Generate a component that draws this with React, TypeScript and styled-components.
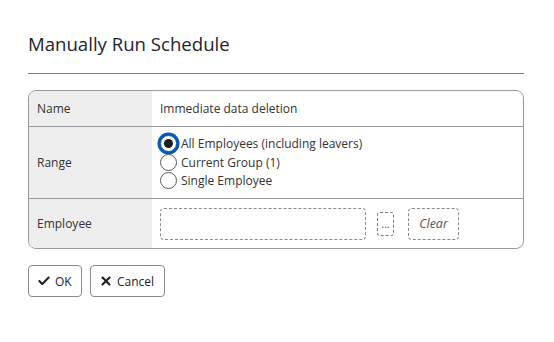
import styled, { createGlobalStyle } from 'styled-components';
import { Check, X } from 'lucide-react';

const GlobalStyle = createGlobalStyle`
  body {
    margin: 0;
    background: #ffffff;
    font-family: 'Open Sans', 'Liberation Sans', sans-serif;
    color: #333333;
  }
`;

const Dialog = styled.div`
  width: 554px;
  height: 342px;
  box-sizing: border-box;
  padding: 31px 30px 0 28px;
`;

const Title = styled.h1`
  margin: 0;
  font-size: 18.6px;
  line-height: 26px;
  font-weight: 500;
  color: #1e2330;
`;

const Divider = styled.hr`
  margin: 16px 0 16px;
  border: none;
  border-top: 1px solid #7d7e86;
`;

const Table = styled.div`
  display: grid;
  grid-template-columns: 123px 1fr;
  border: 1px solid #999a9f;
  border-radius: 8px;
  overflow: hidden;
`;

const Label = styled.div<{ $h: number; $last?: boolean }>`
  height: ${(p) => p.$h}px;
  background: #eeeeef;
  display: flex;
  align-items: center;
  padding-left: 8px;
  font-size: 12px;
  color: #333;
  border-bottom: ${(p) => (p.$last ? 'none' : '1px solid #999a9f')};
`;

const Value = styled.div<{ $h: number; $last?: boolean }>`
  height: ${(p) => p.$h}px;
  display: flex;
  align-items: center;
  padding-left: 8px;
  font-size: 12px;
  color: #333;
  border-bottom: ${(p) => (p.$last ? 'none' : '1px solid #999a9f')};
`;

const RadioList = styled.div`
  display: flex;
  flex-direction: column;
  margin-top: -1px;
`;

const RadioRow = styled.label`
  display: flex;
  align-items: center;
  gap: 4px;
  height: 18.75px;
  font-size: 12px;
  color: #333;
`;

const Circle = styled.span<{ $checked?: boolean }>`
  width: 17px;
  height: 17px;
  box-sizing: border-box;
  border-radius: 50%;
  border: 1px solid ${(p) => (p.$checked ? '#0a58b0' : '#5a5a5a')};
  box-shadow: ${(p) => (p.$checked ? '0 0 0 2.5px #0a58b0' : 'none')};
  display: flex;
  align-items: center;
  justify-content: center;
  background: #fff;
  &::after {
    content: '';
    display: ${(p) => (p.$checked ? 'block' : 'none')};
    width: 9px;
    height: 9px;
    border-radius: 50%;
    background: #1d1d1d;
  }
`;

const EmployeeInput = styled.div`
  width: 206px;
  height: 32px;
  box-sizing: border-box;
  border: 1px dashed #8a8a8a;
  border-radius: 4px;
`;

const DotsButton = styled.button`
  margin-left: 11px;
  width: 17px;
  height: 24px;
  box-sizing: border-box;
  border: 1px dashed #777;
  border-radius: 3px;
  background: #fff;
  padding: 0;
  font-family: inherit;
  font-size: 10px;
  color: #444;
  line-height: 1;
`;

const ClearButton = styled.button`
  margin-left: 14px;
  width: 51px;
  height: 32px;
  box-sizing: border-box;
  border: 1px dashed #888;
  border-radius: 4px;
  background: #fff;
  font-family: inherit;
  font-size: 12.5px;
  font-style: italic;
  color: #555;
`;

const Actions = styled.div`
  display: flex;
  gap: 8px;
  margin-top: 16px;
`;

const ActionButton = styled.button<{ $w: number }>`
  width: ${(p) => p.$w}px;
  height: 32px;
  box-sizing: border-box;
  display: flex;
  align-items: center;
  gap: 4px;
  padding: 0 0 0 8px;
  background: #fff;
  border: 1px solid #8a8b90;
  border-radius: 4px;
  font-family: inherit;
  font-size: 12px;
  color: #222;
  svg {
    flex-shrink: 0;
  }
`;

const options = [
  { label: 'All Employees (including leavers)', checked: true },
  { label: 'Current Group (1)' },
  { label: 'Single Employee' },
];

const App = () => {
  return (
    <Dialog>
      <GlobalStyle />
      <Title>Manually Run Schedule</Title>
      <Divider />
      <Table>
        <Label $h={35}>Name</Label>
        <Value $h={35}>Immediate data deletion</Value>
        <Label $h={71}>Range</Label>
        <Value $h={71}>
          <RadioList>
            {options.map((o) => (
              <RadioRow key={o.label}>
                <Circle $checked={o.checked} />
                {o.label}
              </RadioRow>
            ))}
          </RadioList>
        </Value>
        <Label $h={49} $last>
          Employee
        </Label>
        <Value $h={49} $last>
          <EmployeeInput />
          <DotsButton>...</DotsButton>
          <ClearButton>Clear</ClearButton>
        </Value>
      </Table>
      <Actions>
        <ActionButton $w={54}>
          <Check size={14} strokeWidth={3.6} />
          OK
        </ActionButton>
        <ActionButton $w={75}>
          <X size={14} strokeWidth={3.6} />
          Cancel
        </ActionButton>
      </Actions>
    </Dialog>
  );
};

export default App;
